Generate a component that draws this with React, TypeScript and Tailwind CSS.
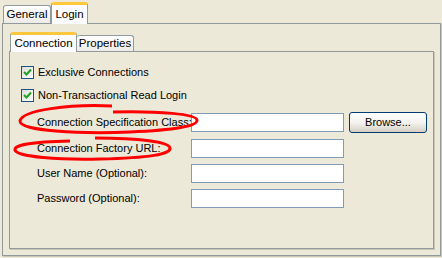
import React from 'react';

const font = { fontFamily: '"Liberation Sans", Arial, sans-serif' };

function Check({ label }: { label: string }) {
  return (
    <div className="flex items-center h-[13px] gap-[4px]">
      <span className="w-[13px] h-[13px] border border-[#1C5180] bg-gradient-to-br from-[#DCDCD7] to-white flex items-center justify-center">
        <svg width="9" height="9" viewBox="0 0 9 9">
          <path d="M1 4 L3.5 6.5 L8 1.5" fill="none" stroke="#21A121" strokeWidth="2" />
        </svg>
      </span>
      <span className="whitespace-nowrap">{label}</span>
    </div>
  );
}

function Field({ label, browse, first }: { label: string; browse?: boolean; first?: boolean }) {
  return (
    <div className={`flex items-center ${first ? 'h-[21px]' : 'h-[19px]'}`}>
      <span className="w-[170px] pl-[16px] whitespace-nowrap">{label}</span>
      <span className="w-[153px] h-[19px] border border-[#7F9DB9] bg-white" />
      {browse && (
        <button className="ml-[5px] w-[78px] h-[21px] rounded-[3px] border border-[#003C74] bg-gradient-to-b from-white via-[#F4F3EE] to-[#D6D0C5] text-black text-[11px]">
          Browse...
        </button>
      )}
    </div>
  );
}

export default function App() {
  return (
    <div className="relative w-[442px] h-[258px] bg-[#ECE9D8] text-[11px] text-black overflow-hidden" style={font}>
      <div className="flex items-end h-[23px] pl-[3px]">
        <div className="h-[18px] w-[48px] border border-b-0 border-[#919B9C] rounded-t-[3px] bg-gradient-to-b from-white to-[#ECEBE6] flex items-center justify-center text-[11.5px]">
          General
        </div>
        <div className="h-[22px] w-[37px] border border-b-0 border-[#919B9C] border-t-[3px] border-t-[#FFC83C] rounded-t-[3px] bg-[#FCFCFE] flex items-center justify-center -mb-[1px] relative text-[11.5px]">
          Login
        </div>
      </div>
      <div className="mx-[2px] w-[439px] h-[233px] border border-[#919B9C] shadow-[1px_1px_0_#C8C6B8] flex flex-col px-[6px] pb-[6px]">
        <div className="flex items-end h-[27px] pl-[1px]">
          <div className="h-[20px] w-[67px] border border-b-0 border-[#919B9C] border-t-[3px] border-t-[#FFC83C] rounded-t-[3px] bg-[#FCFCFE] flex items-center justify-center -mb-[1px] relative z-10 text-[11.5px]">
            Connection
          </div>
          <div className="h-[16px] w-[57px] border border-b-0 border-l-0 border-[#919B9C] rounded-t-[3px] bg-gradient-to-b from-white to-[#ECEBE6] flex items-center justify-center text-[11.5px]">
            Properties
          </div>
        </div>
        <div className="flex-1 border border-[#919B9C] shadow-[1px_1px_0_#C8C6B8] pl-[11px] pt-[14px] flex flex-col">
          <div className="flex flex-col gap-[10px]">
            <Check label="Exclusive Connections" />
            <Check label="Non-Transactional Read Login" />
          </div>
          <div className="flex flex-col gap-[6px] mt-[10px]">
            <Field label="Connection Specification Class:" browse first />
            <Field label="Connection Factory URL:" />
            <Field label="User Name (Optional):" />
            <Field label="Password (Optional):" />
          </div>
        </div>
      </div>
      <svg className="absolute left-0 top-0 pointer-events-none" width="442" height="258">
        <path d="M112 106 C70 104 22 110 20 121 C19 131 80 134 130 132 C175 130 198 126 197 120 C196 114 160 111 113 112" fill="none" stroke="#F00" strokeWidth="3" />
        <path d="M70 141 C30 142 14 145 15 150 C17 157 60 160 100 159 C150 158 171 154 170 148 C169 142 140 138 95 138" fill="none" stroke="#F00" strokeWidth="3" />
      </svg>
    </div>
  );
}
